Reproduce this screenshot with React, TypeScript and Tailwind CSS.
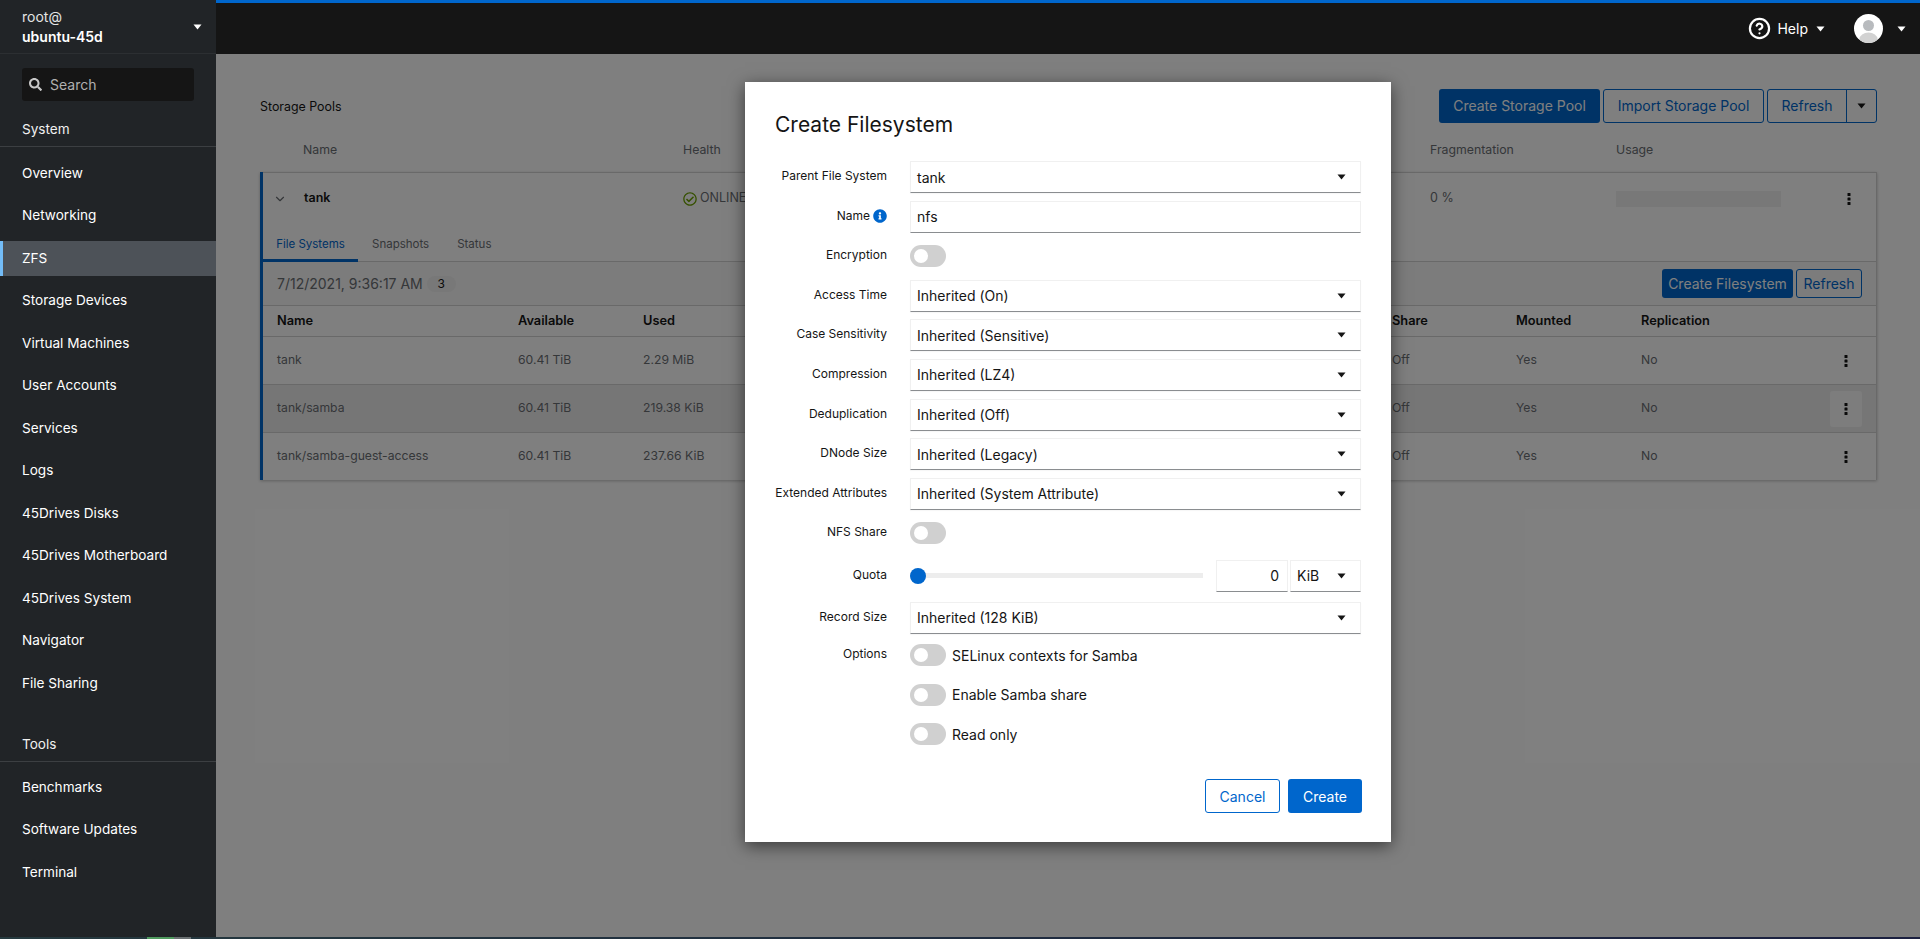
import { ChevronDown, CircleHelp } from "lucide-react";
import { FaInfoCircle, FaRegCheckCircle, FaSearch } from "react-icons/fa";

const systemItems = [
  "Overview",
  "Networking",
  "ZFS",
  "Storage Devices",
  "Virtual Machines",
  "User Accounts",
  "Services",
  "Logs",
  "45Drives Disks",
  "45Drives Motherboard",
  "45Drives System",
  "Navigator",
  "File Sharing",
];

const toolItems = ["Benchmarks", "Software Updates", "Terminal"];

const datasets = [
  { name: "tank", used: "2.29 MiB" },
  { name: "tank/samba", used: "219.38 KiB", hover: true },
  { name: "tank/samba-guest-access", used: "237.66 KiB" },
];

function Caret({ className = "text-[#151515]" }: { className?: string }) {
  return (
    <svg width="9" height="6" viewBox="0 0 9 6" className={`shrink-0 ${className}`}>
      <path d="M0.5 0.5h8L4.5 5.5z" fill="currentColor" />
    </svg>
  );
}

function Kebab() {
  return (
    <svg width="4" height="12" viewBox="0 0 4 12" className="text-[#151515]">
      <rect x="0.5" y="0" width="3" height="3" rx="0.6" fill="currentColor" />
      <rect x="0.5" y="4.5" width="3" height="3" rx="0.6" fill="currentColor" />
      <rect x="0.5" y="9" width="3" height="3" rx="0.6" fill="currentColor" />
    </svg>
  );
}

function NavItem({ label }: { label: string }) {
  const active = label === "ZFS";
  return (
    <div
      className={`mb-[7.5px] flex h-[35px] items-center text-[13.6px] text-white ${
        active ? "border-l-[3px] border-[#73bcf7] bg-[#4d5258] pl-[19px]" : "pl-[22px]"
      }`}
    >
      {label}
    </div>
  );
}

function Sidebar() {
  return (
    <aside className="flex w-[216px] shrink-0 flex-col bg-[#212427] text-white">
      <div className="flex h-[54px] items-center justify-between border-b border-[#2c2f32] pl-[22px] pr-[14px]">
        <div className="text-[14px] leading-[20px]">
          <div className="text-[#e4e4e4]">root@</div>
          <div className="font-semibold">ubuntu-45d</div>
        </div>
        <Caret className="text-white" />
      </div>
      <div className="mx-[22px] mt-[14px] flex h-[33px] w-[172px] items-center gap-[8px] rounded-[3px] bg-[#151515] pl-[7px] text-[14px] text-[#b0b0b0]">
        <FaSearch size={13} className="text-[#c8c8c8]" />
        <span>Search</span>
      </div>
      <div className="mt-[20px] flex h-[26px] items-center border-b border-[#3c3f42] pb-[8px] pl-[22px] text-[13.6px] text-[#f0f0f0]">
        System
      </div>
      <nav className="mt-[8.5px] flex flex-col">
        {systemItems.map((item) => (
          <NavItem key={item} label={item} />
        ))}
      </nav>
      <div className="mt-[27.5px] flex h-[26px] items-center border-b border-[#3c3f42] pb-[8px] pl-[22px] text-[13.6px] text-[#f0f0f0]">
        Tools
      </div>
      <nav className="mt-[8px] flex flex-col">
        {toolItems.map((item) => (
          <NavItem key={item} label={item} />
        ))}
      </nav>
    </aside>
  );
}

function TopBar() {
  return (
    <header className="flex h-[54px] shrink-0 items-center justify-end border-t-[3px] border-[#0066cc] bg-[#151515] text-white">
      <div className="flex items-center">
        <CircleHelp size={23} strokeWidth={2.3} />
        <span className="ml-[6px] text-[14px]">Help</span>
        <Caret className="ml-[8px] text-white" />
      </div>
      <div className="ml-[29px] flex h-[29px] w-[29px] items-center justify-center overflow-hidden rounded-full bg-white">
        <svg width="29" height="29" viewBox="0 0 29 29">
          <circle cx="14.5" cy="11.5" r="5.5" fill="#b8bbbe" />
          <ellipse cx="14.5" cy="25" rx="9" ry="6.5" fill="#d2d2d2" />
        </svg>
      </div>
      <Caret className="ml-[14px] mr-[14px] text-white" />
    </header>
  );
}

function PoolsPage() {
  return (
    <div className="h-full bg-white pl-[44px] pr-[43px] pt-[33px]">
      <div className="flex h-[37px] items-center justify-between">
        <span className="pt-[3px] text-[12.4px] text-[#151515]">Storage Pools</span>
        <div className="flex h-[34px] gap-[3px] text-[14px]">
          <button className="w-[161px] rounded-[3px] bg-[#0066cc] text-white">Create Storage Pool</button>
          <button className="w-[161px] rounded-[3px] border border-[#0066cc] text-[#0066cc]">Import Storage Pool</button>
          <div className="flex w-[110px] rounded-[3px] border border-[#0066cc]">
            <button className="w-[79px] border-r border-[#0066cc] text-[#0066cc]">Refresh</button>
            <div className="flex flex-1 items-center justify-center">
              <Caret />
            </div>
          </div>
        </div>
      </div>

      <div className="grid h-[48px] grid-cols-[423px_747px_186px_auto] items-center pt-[5px] text-[12.3px] text-[#6a6e73]">
        <span className="pl-[43px]">Name</span>
        <span>Health</span>
        <span>Fragmentation</span>
        <span>Usage</span>
      </div>

      <div className="border-l-[3px] border-[#0066cc] shadow-[0_1px_3px_rgba(0,0,0,0.25)]">
        <div className="border-t border-r border-[#d2d2d2]">
          <div className="grid h-[51px] grid-cols-[420px_747px_186px_165px_auto] items-center text-[12.5px]">
            <div className="flex items-center">
              <ChevronDown size={14} className="ml-[10px] text-[#6a6e73]" />
              <span className="ml-[17px] font-semibold text-[#151515]">tank</span>
            </div>
            <div className="flex items-center gap-[3px] text-[#6a6e73]">
              <FaRegCheckCircle size={14} className="text-[#6ca100]" />
              <span>ONLINE</span>
            </div>
            <span className="text-[#6a6e73]">0 %</span>
            <div className="h-[16px] bg-[#f0f0f0]" />
            <div className="flex justify-end pr-[25px]">
              <Kebab />
            </div>
          </div>

          <div className="flex h-[38px] items-start border-b border-[#d2d2d2] text-[11.5px] text-[#6a6e73]">
            <div className="flex h-[38px] w-[95px] items-center justify-center border-b-[3px] border-[#0066cc] pt-[6px] text-[#0066cc]">
              File Systems
            </div>
            <div className="flex h-[38px] items-center pl-[14px] pr-[14px] pt-[4px]">Snapshots</div>
            <div className="flex h-[38px] items-center pl-[14px] pt-[4px]">Status</div>
          </div>

          <div className="flex h-[44px] items-center border-b border-[#d2d2d2] bg-[#f8f8f8] pl-[14px] pr-[14px] text-[14px] text-[#6a6e73]">
            <span>7/12/2021, 9:36:17 AM</span>
            <span className="ml-[4px] flex h-[16px] w-[29px] items-center justify-center rounded-full bg-[#f0f0f0] text-[12px] text-[#151515]">
              3
            </span>
            <div className="ml-auto flex h-[29px] gap-[3px] text-[14px]">
              <button className="w-[131px] rounded-[3px] bg-[#0066cc] text-white">Create Filesystem</button>
              <button className="w-[66px] rounded-[3px] border border-[#0066cc] text-[#0066cc]">Refresh</button>
            </div>
          </div>

          <div className="grid h-[31px] grid-cols-[241px_125px_749px_124px_125px_auto] items-center border-b border-[#d2d2d2] pl-[14px] text-[12.8px] font-semibold text-[#151515]">
            <span>Name</span>
            <span>Available</span>
            <span>Used</span>
            <span>Share</span>
            <span>Mounted</span>
            <span>Replication</span>
          </div>

          {datasets.map((row, index) => (
            <div
              key={row.name}
              className={`grid grid-cols-[241px_125px_749px_124px_125px_auto] items-center pl-[14px] text-[12.2px] text-[#6a6e73] ${
                index < 2 ? "h-[48px] border-b border-[#d2d2d2]" : "h-[47px]"
              } ${row.hover ? "bg-[#ededed]" : ""}`}
            >
              <span>{row.name}</span>
              <span>60.41 TiB</span>
              <span>{row.used}</span>
              <span>Off</span>
              <span>Yes</span>
              <div className="flex items-center justify-between pr-[14px]">
                <span>No</span>
                <div
                  className={`flex h-[36px] w-[32px] items-center justify-center rounded-[3px] ${
                    row.hover ? "bg-[#fafafa]" : ""
                  }`}
                >
                  <Kebab />
                </div>
              </div>
            </div>
          ))}
        </div>
      </div>
    </div>
  );
}

function Toggle() {
  return (
    <div className="flex h-[22px] w-[36px] shrink-0 items-center rounded-full bg-[#d0d0d0] pl-[4px]">
      <div className="h-[14px] w-[14px] rounded-full bg-white" />
    </div>
  );
}

function Select({ value }: { value: string }) {
  return (
    <div className="flex h-[32px] items-center justify-between border border-[#f0f0f0] border-b-[#8a8d90] pl-[6px] pr-[14px] text-[14px] text-[#151515] shadow-[0_1px_1px_rgba(0,0,0,0.03)]">
      <span>{value}</span>
      <Caret />
    </div>
  );
}

function Row({ label, info, children, className = "" }: { label?: string; info?: boolean; children: React.ReactNode; className?: string }) {
  return (
    <div className={`grid grid-cols-[112px_1fr] items-center gap-x-[23px] ${className}`}>
      <div className="flex items-center justify-end gap-[3px] whitespace-nowrap pb-[2px] text-[12px] text-[#151515]">
        {label}
        {info && <FaInfoCircle size={14} className="text-[#0066cc]" />}
      </div>
      <div>{children}</div>
    </div>
  );
}

function ToggleRow({ label, text, className }: { label?: string; text?: string; className?: string }) {
  return (
    <Row label={label} className={className}>
      <div className="flex h-[32px] items-center gap-[6px] text-[14px] text-[#151515]">
        <Toggle />
        {text && <span>{text}</span>}
      </div>
    </Row>
  );
}

function CreateFilesystemModal() {
  return (
    <div className="absolute inset-0 flex justify-center bg-black/50 pt-[28px]">
      <div className="h-[760px] w-[646px] bg-white px-[30px] pt-[26px] shadow-[0_4px_16px_rgba(0,0,0,0.55)]">
        <h1 className="text-[21px] leading-[34px] text-[#151515]">Create Filesystem</h1>
        <div className="mt-[19px] flex flex-col gap-[7.6px]">
          <Row label="Parent File System"><Select value="tank" /></Row>
          <Row label="Name" info>
            <div className="flex h-[32px] items-center border border-[#f0f0f0] border-b-[#8a8d90] pl-[6px] text-[14px] text-[#151515]">nfs</div>
          </Row>
          <ToggleRow label="Encryption" />
          <Row label="Access Time"><Select value="Inherited (On)" /></Row>
          <Row label="Case Sensitivity"><Select value="Inherited (Sensitive)" /></Row>
          <Row label="Compression"><Select value="Inherited (LZ4)" /></Row>
          <Row label="Deduplication"><Select value="Inherited (Off)" /></Row>
          <Row label="DNode Size"><Select value="Inherited (Legacy)" /></Row>
          <Row label="Extended Attributes"><Select value="Inherited (System Attribute)" /></Row>
          <ToggleRow label="NFS Share" />
          <Row label="Quota" className="mt-[3px]">
            <div className="flex h-[32px] items-center">
              <div className="flex h-[5px] w-[293px] items-center bg-[#ededed]">
                <div className="h-[16px] w-[16px] rounded-full bg-[#0066cc]" />
              </div>
              <div className="ml-[13px] flex h-[32px] w-[72px] items-center justify-end border border-[#f0f0f0] border-b-[#8a8d90] pr-[8px] text-[14px] text-[#151515]">0</div>
              <div className="ml-[2px] flex h-[32px] flex-1 items-center justify-between border border-[#f0f0f0] border-b-[#8a8d90] pl-[6px] pr-[14px] text-[14px] text-[#151515]">
                KiB
                <Caret />
              </div>
            </div>
          </Row>
          <Row label="Record Size" className="mt-[2px]"><Select value="Inherited (128 KiB)" /></Row>
          <ToggleRow label="Options" text="SELinux contexts for Samba" className="mt-[-2px]" />
          <ToggleRow text="Enable Samba share" />
          <ToggleRow text="Read only" />
        </div>
        <div className="mr-[-1px] mt-[29px] flex justify-end gap-[8px] text-[14px]">
          <button className="h-[34px] w-[75px] rounded-[3px] border border-[#0066cc] text-[#0066cc]">Cancel</button>
          <button className="h-[34px] w-[74px] rounded-[3px] bg-[#0066cc] text-white">Create</button>
        </div>
      </div>
    </div>
  );
}

export default function App() {
  return (
    <div className="flex h-screen flex-col overflow-hidden font-['Inter',sans-serif]">
      <div className="flex min-h-0 flex-1">
        <Sidebar />
        <div className="flex min-w-0 flex-1 flex-col">
          <TopBar />
          <main className="relative min-h-0 flex-1">
            <PoolsPage />
            <CreateFilesystemModal />
          </main>
        </div>
      </div>
      <div className="flex h-[2px] shrink-0 bg-gradient-to-r from-[#263a3f] to-[#1b2040]">
        <div className="ml-[147px] w-[27px] bg-[#4f9a5e]" />
        <div className="w-[17px] bg-[#6a7072]" />
      </div>
    </div>
  );
}
